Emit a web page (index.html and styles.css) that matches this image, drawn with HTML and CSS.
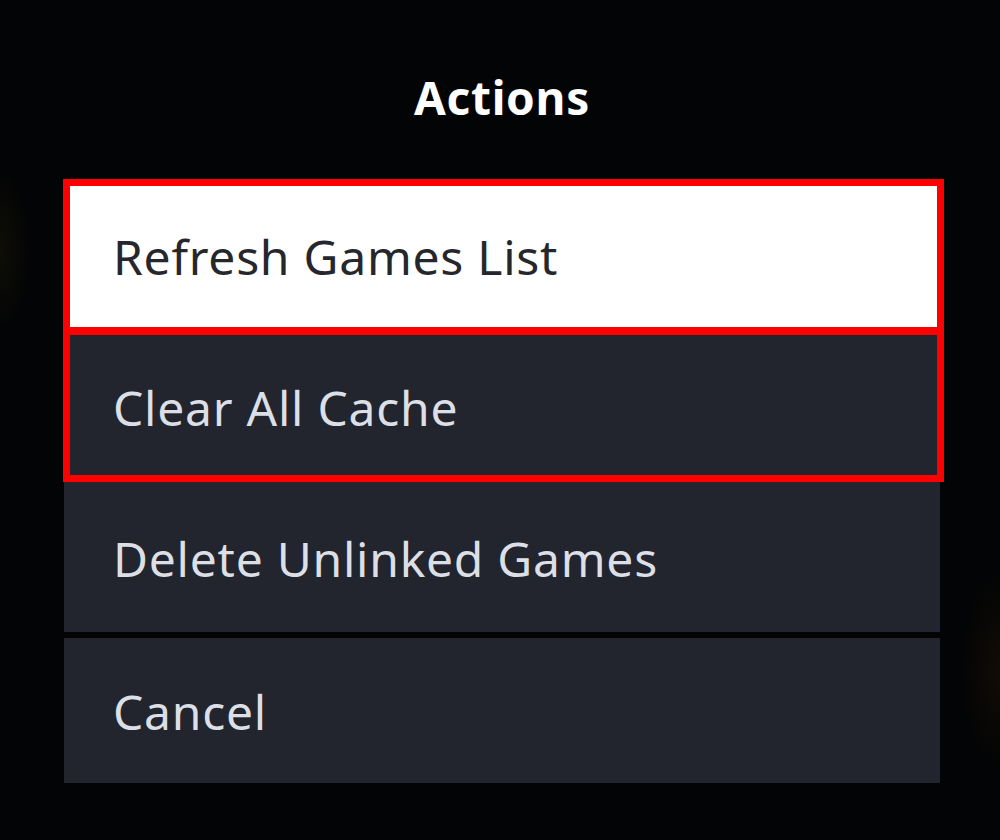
FILE: index.html
```html
<!DOCTYPE html>
<html lang="en">
<head>
<meta charset="utf-8">
<title>Actions</title>
<link rel="stylesheet" href="styles.css">
</head>
<body>
<div class="screen">
  <h1 class="title">Actions</h1>
  <div class="menu">
    <div class="item item-focused">Refresh Games List</div>
    <div class="item item-second">Clear All Cache</div>
    <div class="item item-third">Delete Unlinked Games</div>
    <div class="item item-last">Cancel</div>
    <div class="highlight highlight-one"></div>
    <div class="highlight highlight-two"></div>
  </div>
</div>
</body>
</html>
```

FILE: styles.css
```css
html, body {
  margin: 0;
  padding: 0;
  width: 1000px;
  height: 840px;
  overflow: hidden;
}

body {
  background-color: #030405;
  font-family: "Noto Sans", "Open Sans", "DejaVu Sans", sans-serif;
}

.screen {
  width: 1000px;
  height: 840px;
  box-sizing: border-box;
  padding-top: 64px;
  background:
    radial-gradient(ellipse 30px 80px at 0px 250px, rgba(100, 85, 20, 0.12), rgba(0,0,0,0) 100%),
    radial-gradient(ellipse 40px 100px at 1000px 670px, rgba(90, 50, 10, 0.16), rgba(0,0,0,0) 100%),
    #030405;
}

.title {
  margin: 0;
  height: 66px;
  line-height: 66px;
  text-align: center;
  padding-left: 4px;
  font-size: 46px;
  font-weight: 700;
  color: #ffffff;
  letter-spacing: 0.7px;
}

.menu {
  position: relative;
  margin: 50px 0 0 64px;
  width: 876px;
  display: flex;
  flex-direction: column;
}

.item {
  display: flex;
  align-items: center;
  box-sizing: border-box;
  height: 150px;
  padding-left: 49px;
  padding-top: 2px;
  background-color: #22252d;
  color: #dcdfe5;
  font-size: 48px;
  letter-spacing: 0.75px;
}

.item-focused {
  background-color: #ffffff;
  color: #25272c;
}

.item-second {
  margin-top: 2px;
  height: 149px;
}

.item-third {
  margin-top: 1px;
}

.item-last {
  margin-top: 6px;
  height: 145px;
}

.highlight {
  position: absolute;
  left: -1px;
  width: 881px;
  box-sizing: border-box;
  border: 7px solid #ff0000;
}

.highlight-one {
  top: -1px;
  height: 155px;
}

.highlight-two {
  top: 148px;
  height: 154px;
}
```
